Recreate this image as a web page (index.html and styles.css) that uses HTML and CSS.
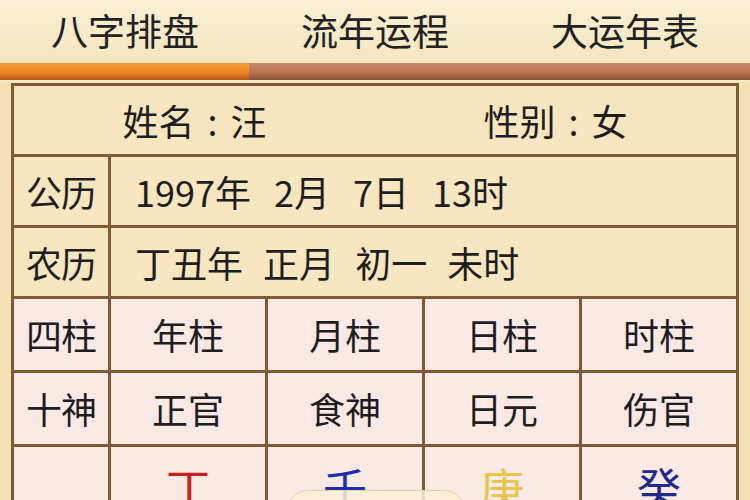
FILE: index.html
```html
<!DOCTYPE html>
<html lang="zh-CN">
<head>
    <meta charset="UTF-8">
    <meta name="viewport" content="width=device-width, initial-scale=1.0">
    <title>八字排盘</title>
    <link rel="stylesheet" href="styles.css">
</head>
<body>
    <nav class="tabs">
        <div class="tab active">八字排盘</div>
        <div class="tab">流年运程</div>
        <div class="tab">大运年表</div>
    </nav>
    <div class="tab-line">
        <div class="tab-line-active"></div>
        <div class="tab-line-rest"></div>
    </div>
    <div class="chart-wrap">
        <table class="chart">
            <colgroup>
                <col class="col-label">
                <col>
                <col>
                <col>
                <col>
            </colgroup>
            <tr class="row-info">
                <td colspan="5">
                    <div class="info">
                        <span>姓名<i class="colon">:</i>汪</span>
                        <span>性别<i class="colon">:</i>女</span>
                    </div>
                </td>
            </tr>
            <tr class="row-info">
                <td class="label">公历</td>
                <td class="value solar" colspan="4">1997年 2月 7日 13时</td>
            </tr>
            <tr class="row-info">
                <td class="label">农历</td>
                <td class="value" colspan="4">丁丑年 正月 初一 未时</td>
            </tr>
            <tr class="row-pillar">
                <td class="label">四柱</td>
                <td>年柱</td>
                <td>月柱</td>
                <td>日柱</td>
                <td>时柱</td>
            </tr>
            <tr class="row-pillar">
                <td class="label">十神</td>
                <td>正官</td>
                <td>食神</td>
                <td>日元</td>
                <td>伤官</td>
            </tr>
            <tr class="row-pillar row-stem">
                <td class="label">天干</td>
                <td class="fire">丁</td>
                <td class="water">壬</td>
                <td class="metal">庚</td>
                <td class="water-dark">癸</td>
            </tr>
        </table>
    </div>
    <div class="float-button"></div>
</body>
</html>
```

FILE: styles.css
```css
body {
    margin: 0;
    padding: 0;
    background-color: #f4e2b6;
    font-family: "Noto Sans CJK SC", "Noto Sans", sans-serif;
    color: #1e1e1e;
    overflow: hidden;
}

.tabs {
    display: grid;
    grid-template-columns: repeat(3, 1fr);
    height: 63px;
    background: linear-gradient(#fbf1d6, #f6e6bf);
}

.tab {
    display: flex;
    align-items: center;
    justify-content: center;
    font-size: 37px;
    color: #222;
    padding-bottom: 4px;
}

.tab-line {
    display: grid;
    grid-template-columns: 249px 1fr;
    height: 17px;
    border-bottom: 2px solid #f8e9c4;
}

.tab-line-active {
    background: linear-gradient(#f39a3a 0%, #ef8620 55%, #b3561a 100%);
}

.tab-line-rest {
    background: linear-gradient(#c98a66 0%, #b87554 55%, #8e5236 100%);
}

.chart-wrap {
    padding: 1px 11px 0 11px;
}

.chart {
    width: 728px;
    border-collapse: collapse;
    table-layout: fixed;
    font-size: 36px;
    line-height: 1.3;
}

.col-label {
    width: 97px;
}

.chart td {
    border: 3px solid #7f5a34;
    text-align: center;
    padding: 0;
}

.row-info td {
    height: 68px;
    background-color: #f7e6bf;
}

.info {
    display: flex;
    font-size: 36px;
}

.info span {
    flex: 1;
    text-align: center;
}

.colon {
    font-style: normal;
    margin: 0 13px;
}

.chart .label {
    letter-spacing: -1px;
}

.chart .value {
    text-align: left;
    padding-left: 24px;
    word-spacing: 12px;
}

.chart .solar {
    word-spacing: 15px;
}

.row-pillar td {
    height: 71px;
    background-color: #fbe9e6;
}

.row-stem td {
    height: 90px;
    vertical-align: top;
    padding-top: 12px;
    font-size: 44px;
}

.row-stem .label {
    padding-top: 46px;
    font-size: 36px;
}

.fire {
    color: #c8201c;
}

.water {
    color: #1a2fa8;
}

.metal {
    color: #e5c64a;
}

.water-dark {
    color: #1e2a8c;
}

.float-button {
    position: absolute;
    left: 287px;
    top: 490px;
    width: 176px;
    height: 40px;
    border-radius: 22px;
    background-color: rgba(250, 240, 215, 0.85);
    border: 1px solid #e6d3a5;
}
```
